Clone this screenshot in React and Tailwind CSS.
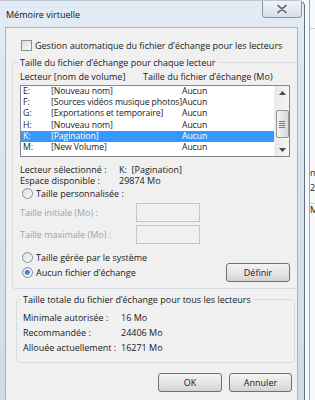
import React from 'react';

const drives = [
  { d: 'E:', name: '[Nouveau nom]' },
  { d: 'F:', name: '[Sources vidéos musique photos]' },
  { d: 'G:', name: '[Exportations et  temporaire]' },
  { d: 'H:', name: '[Nouveau nom]' },
  { d: 'K:', name: '[Pagination]', selected: true },
  { d: 'M:', name: '[New Volume]' },
];

function Radio({ checked }) {
  return (
    <span className="w-[11px] h-[11px] rounded-full border border-[#8a8f96] bg-gradient-to-br from-[#d9dde2] to-[#fbfbfb] flex items-center justify-center shrink-0">
      {checked && (
        <span className="w-[5px] h-[5px] rounded-full bg-gradient-to-br from-[#1d5db5] to-[#6fb0f0]" />
      )}
    </span>
  );
}

function WinButton({ children, className }) {
  return (
    <button
      className={`h-[19px] rounded-[3px] border border-[#707070] bg-gradient-to-b from-[#f3f3f3] via-[#e6e6e6] to-[#d3d3d3] text-[#1a1a1a] leading-[17px] ${className}`}
    >
      {children}
    </button>
  );
}

function Scrollbar() {
  return (
    <div className="w-[15px] h-full flex flex-col items-center bg-gradient-to-r from-[#e9e9e9] to-[#f5f5f5] border-l border-[#ededed]">
      <div className="h-[13px] w-full flex items-center justify-center">
        <svg width="7" height="4" viewBox="0 0 7 4">
          <path d="M0 4 L3.5 0 L7 4 Z" fill="#4a4a4a" />
        </svg>
      </div>
      <div className="mt-[11px] h-[28px] w-[13px] rounded-[2px] border border-[#979797] bg-gradient-to-r from-[#f4f4f4] to-[#d8d8d8] flex flex-col items-center justify-center gap-[1px]">
        <span className="w-[6px] h-px bg-[#7c7c7c]" />
        <span className="w-[6px] h-px bg-[#7c7c7c]" />
        <span className="w-[6px] h-px bg-[#7c7c7c]" />
        <span className="w-[6px] h-px bg-[#7c7c7c]" />
      </div>
      <div className="mt-auto h-[13px] w-full flex items-center justify-center">
        <svg width="7" height="4" viewBox="0 0 7 4">
          <path d="M0 0 L3.5 4 L7 0 Z" fill="#4a4a4a" />
        </svg>
      </div>
    </div>
  );
}

export default function App() {
  return (
    <div className="w-[315px] h-[400px] overflow-hidden flex bg-white font-['Open_Sans',sans-serif] text-[9px] text-[#1a1a1a]">
      {/* dialog window */}
      <div className="w-[305px] h-[400px] shrink-0 flex flex-col bg-gradient-to-b from-[#e3ebf4] to-[#cfdbe8] border-r border-t border-r-[#5e6f82] border-t-[#b9c6d4] rounded-tr-[6px]">
        <div className="h-[26px] flex items-start">
          <span className="ml-[6px] mt-[8px] leading-[11px] text-[9px] text-[#111]">Mémoire virtuelle</span>
          <div className="ml-auto mr-[2px] w-[40px] h-[17px] rounded-b-[4px] border border-t-0 border-[#8a97a6] bg-gradient-to-b from-[#f1f4f8] to-[#d6dee8] flex items-center justify-center">
            <svg width="12" height="10" viewBox="0 0 12 10">
              <path d="M2 1.5 L10 8.5 M10 1.5 L2 8.5" stroke="#ffffff" strokeWidth="3.4" strokeLinecap="round" />
              <path d="M2 1.5 L10 8.5 M10 1.5 L2 8.5" stroke="#69737e" strokeWidth="2" strokeLinecap="round" />
            </svg>
          </div>
        </div>

        {/* client area */}
        <div className="ml-[5px] w-[293px] flex-1 bg-[#f0f0f0] border border-b-0 border-[#a7b3c1] flex flex-col">
          <div className="mt-[12px] ml-[15px] flex items-center h-[11px]">
            <span className="w-[11px] h-[11px] border border-[#8e8f8f] bg-gradient-to-br from-[#dcdcdc] to-[#fafafa]" />
            <span className="ml-[3px] leading-[11px]">Gestion automatique du fichier d’échange pour les lecteurs</span>
          </div>

          <fieldset className="mt-[6px] ml-[6px] w-[284px] border border-[#d5dce3] rounded-[3px] pb-[7px]">
            <legend className="ml-[5px] px-[2px] leading-[11px]">Taille du fichier d’échange pour chaque lecteur</legend>
            <div className="pl-[7px] pr-[10px] flex flex-col">
              <div className="mt-[3px] flex leading-[11px]">
                <span className="w-[123px]">Lecteur [nom de volume]</span>
                <span>Taille du fichier d’échange (Mo)</span>
              </div>

              <div className="mt-[3px] w-[270px] h-[72px] border border-[#828790] bg-white flex">
                <div className="flex-1 flex flex-col text-[8.7px] tracking-[-0.1px]">
                  {drives.map((r) => (
                    <div
                      key={r.d}
                      className={`h-[11.2px] leading-[11px] flex whitespace-nowrap pl-[2px] ${
                        r.selected ? 'bg-[#3399ff] text-white' : ''
                      }`}
                    >
                      <span className="w-[28px]">{r.d}</span>
                      <span className="w-[131px]">{r.name}</span>
                      <span>Aucun</span>
                    </div>
                  ))}
                </div>
                <Scrollbar />
              </div>

              <div className="mt-[7px] flex leading-[11px]">
                <span className="w-[99px]">Lecteur sélectionné :</span>
                <span>K:&nbsp;&nbsp;[Pagination]</span>
              </div>
              <div className="flex leading-[11px]">
                <span className="w-[99px]">Espace disponible :</span>
                <span>29874 Mo</span>
              </div>

              <div className="mt-[2px] ml-[2px] flex items-center h-[11px]">
                <Radio />
                <span className="ml-[3px] leading-[11px]">Taille personnalisée :</span>
              </div>

              <div className="mt-[4px] flex items-center h-[19px] text-[#a2a2a2]">
                <span className="w-[116px]">Taille initiale (Mo) :</span>
                <span className="w-[64px] h-[19px] border border-[#c3c7cb] bg-[#f0f0f0]" />
              </div>
              <div className="mt-[3px] flex items-center h-[19px] text-[#a2a2a2]">
                <span className="w-[116px]">Taille maximale (Mo) :</span>
                <span className="w-[64px] h-[19px] border border-[#c3c7cb] bg-[#f0f0f0]" />
              </div>

              <div className="mt-[8px] ml-[2px] flex items-center h-[11px]">
                <Radio />
                <span className="ml-[3px] leading-[11px]">Taille gérée par le système</span>
              </div>

              <div className="mt-0 flex items-center h-[18px]">
                <span className="ml-[2px]"><Radio checked /></span>
                <span className="ml-[3px] leading-[11px]">Aucun fichier d’échange</span>
                <WinButton className="ml-auto w-[64px] h-[18px]">Définir</WinButton>
              </div>
            </div>
          </fieldset>

          <fieldset className="mt-[5px] ml-[10px] w-[279px] border border-[#d5dce3] rounded-[3px] pb-[7px]">
            <legend className="ml-[4px] px-[2px] leading-[11px]">Taille totale du fichier d’échange pour tous les lecteurs</legend>
            <div className="mt-[5px] pl-[6px] flex flex-col leading-[15px]">
              <div className="flex">
                <span className="w-[98px]">Minimale autorisée :</span>
                <span>16 Mo</span>
              </div>
              <div className="flex">
                <span className="w-[98px]">Recommandée :</span>
                <span>24406 Mo</span>
              </div>
              <div className="flex">
                <span className="w-[98px]">Allouée actuellement :</span>
                <span>16271 Mo</span>
              </div>
            </div>
          </fieldset>

          <div className="mt-[10px] pr-[5px] flex justify-end gap-[7px]">
            <WinButton className="w-[64px]">OK</WinButton>
            <WinButton className="w-[63px]">Annuler</WinButton>
          </div>
        </div>
      </div>

      {/* window behind */}
      <div className="flex-1 h-[400px] flex bg-[#f7f8f9] overflow-hidden">
        <div className="w-[5px] shrink-0 border-r border-[#9aa3ad]" />
        <div className="flex-1 flex flex-col text-[9px] leading-[11px] text-[#222] whitespace-nowrap">
          <div className="mt-[28px] border-t border-[#c9ced4]" />
          <span className="mt-[138px]">ne</span>
          <span className="mt-[4px]">27</span>
          <span className="mt-[10px] border-t border-[#c9ced4]">M</span>
        </div>
      </div>
    </div>
  );
}
